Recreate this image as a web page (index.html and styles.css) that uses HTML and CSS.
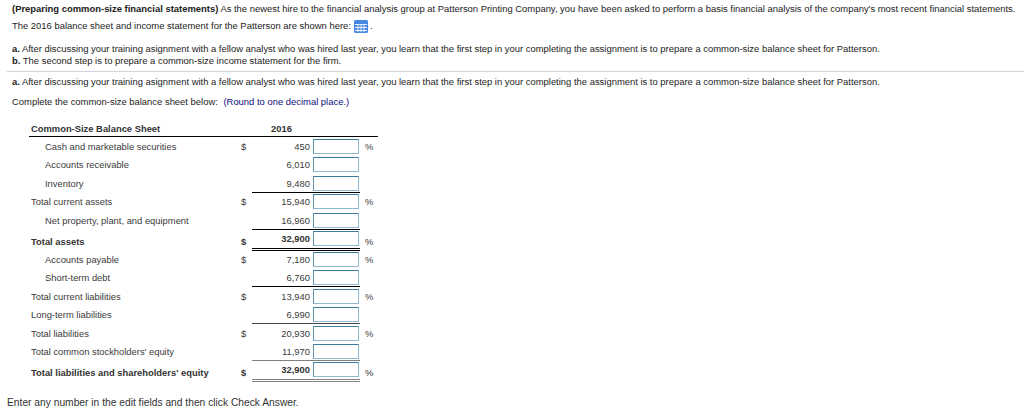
FILE: index.html
```html
<!DOCTYPE html>
<html lang="en">
<head>
<meta charset="utf-8">
<title>Common-Size Balance Sheet</title>
<link rel="stylesheet" href="styles.css">
</head>
<body>
<section class="intro">
  <p class="line"><b>(Preparing common-size financial statements)</b> As the newest hire to the financial analysis group at Patterson Printing Company, you have been asked to perform a basis financial analysis of the company's most recent financial statements.</p>
  <p class="line second">The 2016 balance sheet and income statement for the Patterson are shown here:
    <svg class="grid-icon" width="14" height="13" viewBox="0 0 14 13"><rect width="14" height="13" rx="1.500" fill="#4a86e4"/><path d="M1 4.500h12M1 7.500h12M1 10.500h12M4 4v8M7 4v8M10 4v8" stroke="#e4eefc" fill="none"/></svg> .</p>
  <p class="line gap"><b>a.</b> After discussing your training asignment with a fellow analyst who was hired last year, you learn that the first step in your completing the assignment is to prepare a common-size balance sheet for Patterson.</p>
  <p class="line"><b>b.</b> The second step is to prepare a common-size income statement for the firm.</p>
</section>
<hr class="rule">
<section class="part">
  <p class="line"><b>a.</b> After discussing your training asignment with a fellow analyst who was hired last year, you learn that the first step in your completing the assignment is to prepare a common-size balance sheet for Patterson.</p>
  <p class="line prompt">Complete the common-size balance sheet below: <span class="hint">(Round to one decimal place.)</span></p>
</section>
<div class="sheet">
  <div class="head"><span class="head-label">Common-Size Balance Sheet</span><span class="year">2016</span></div>
  <div class="row"><span class="label sub">Cash and marketable securities</span><span class="cur">$</span><div class="cells"><span class="amt">450</span><span class="field"></span></div><span class="pct">%</span></div>
  <div class="row"><span class="label sub">Accounts receivable</span><span class="cur"></span><div class="cells"><span class="amt">6,010</span><span class="field"></span></div></div>
  <div class="row"><span class="label sub">Inventory</span><span class="cur"></span><div class="cells ruled"><span class="amt">9,480</span><span class="field"></span></div></div>
  <div class="row"><span class="label">Total current assets</span><span class="cur">$</span><div class="cells"><span class="amt">15,940</span><span class="field"></span></div><span class="pct">%</span></div>
  <div class="row"><span class="label sub">Net property, plant, and equipment</span><span class="cur"></span><div class="cells ruled"><span class="amt">16,960</span><span class="field"></span></div></div>
  <div class="row total"><span class="label">Total assets</span><span class="cur">$</span><div class="cells double"><span class="amt">32,900</span><span class="field"></span></div><span class="pct">%</span></div>
  <div class="row"><span class="label sub">Accounts payable</span><span class="cur">$</span><div class="cells"><span class="amt">7,180</span><span class="field"></span></div><span class="pct">%</span></div>
  <div class="row"><span class="label sub">Short-term debt</span><span class="cur"></span><div class="cells ruled"><span class="amt">6,760</span><span class="field"></span></div></div>
  <div class="row"><span class="label">Total current liabilities</span><span class="cur">$</span><div class="cells"><span class="amt">13,940</span><span class="field"></span></div><span class="pct">%</span></div>
  <div class="row"><span class="label">Long-term liabilities</span><span class="cur"></span><div class="cells ruled dim"><span class="amt">6,990</span><span class="field"></span></div></div>
  <div class="row"><span class="label">Total liabilities</span><span class="cur">$</span><div class="cells"><span class="amt">20,930</span><span class="field"></span></div><span class="pct">%</span></div>
  <div class="row"><span class="label">Total common stockholders' equity</span><span class="cur"></span><div class="cells ruled dimmer"><span class="amt">11,970</span><span class="field"></span></div></div>
  <div class="row total"><span class="label">Total liabilities and shareholders' equity</span><span class="cur">$</span><div class="cells double dimmer"><span class="amt">32,900</span><span class="field"></span></div><span class="pct">%</span></div>
</div>
<p class="footer">Enter any number in the edit fields and then click Check Answer.</p>
</body>
</html>
```
FILE: styles.css
```css
* { box-sizing: border-box; }
html, body { margin: 0; padding: 0; }
body { width: 1024px; height: 409px; overflow: hidden; background: #fff; color: #1c1c1c; font: 9.430px/15px "Liberation Sans", Arial, sans-serif; }
p { margin: 0; }
.line { height: 12px; line-height: 12px; white-space: nowrap; }
.intro { padding: 3px 0 0 12px; }
.second { margin-top: 3px; height: 15px; line-height: 15px; }
.gap { margin-top: 10px; }
.grid-icon { vertical-align: -4px; }
.rule { margin: 4px 0 0 7px; border: 0; height: 1px; background: #d2d2da; }
.part { padding: 4px 0 0 12px; }
.prompt { margin-top: 8px; }
.hint { color: #10107e; margin-left: 3px; }
.sheet { width: 349px; margin: 13px 0 0 29px; color: #3a3a3a; font-size: 9.400px; }
.head { display: flex; height: 16px; border-bottom: 1px solid #000; font-weight: bold; color: #333; margin-bottom: 2px; }
.head-label { width: 242px; padding-left: 2px; white-space: nowrap; }
.year { width: 21px; text-align: center; }
.row { display: flex; align-items: flex-start; height: 18.400px; }
.label { width: 212px; padding-left: 2px; white-space: nowrap; }
.sub { padding-left: 16px; }
.cur { width: 11px; }
.cells { display: flex; width: 108px; height: 17px; border-bottom: 1px solid transparent; }
.ruled { border-bottom-color: #000; }
.double { height: 20px; border-bottom: 3px double #000; }
.dim { border-bottom-color: #444; }
.dimmer { border-bottom-color: #808080; }
.amt { width: 61px; text-align: right; padding-right: 3px; }
.field { width: 46px; height: 15px; border: 1px solid #8fbad0; border-top-color: #3f7c9c; border-left-color: #5f93ae; background: #fff; }
.pct { margin-left: 5px; }
.total { height: 21px; font-weight: bold; color: #333; }
.total .label, .total .cur, .total .pct { margin-top: 3px; }
.total .pct { font-weight: normal; }
.footer { margin-top: 14px; padding-left: 7px; line-height: 12px; color: #333; font-size: 10.250px; }
```
